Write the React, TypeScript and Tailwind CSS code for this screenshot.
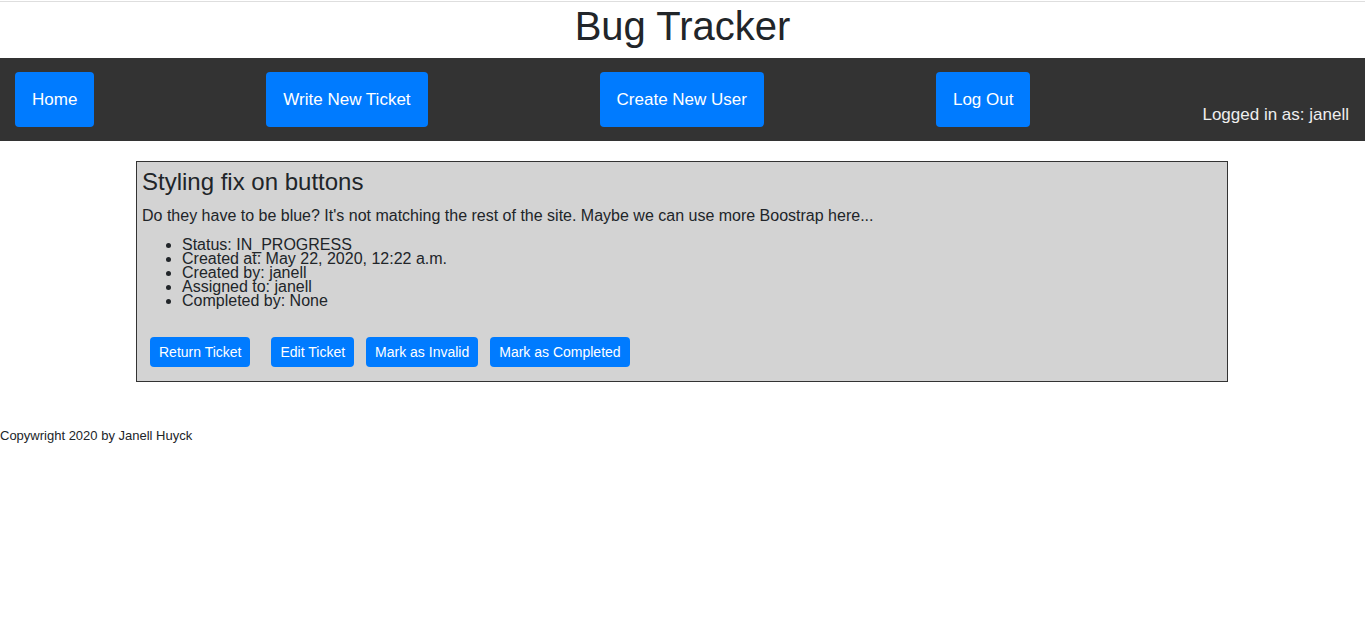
const navButtons = ["Home", "Write New Ticket", "Create New User", "Log Out"];

const details = [
  "Status: IN_PROGRESS",
  "Created at: May 22, 2020, 12:22 a.m.",
  "Created by: janell",
  "Assigned to: janell",
  "Completed by: None",
];

export default function App() {
  return (
    <div className="min-h-[637px] bg-white font-['Liberation_Sans',Arial,sans-serif] text-[#212529]">
      <div className="h-px mt-px bg-[#dedede]" />
      <h1 className="text-center text-[40px] leading-[48px] mb-[8px]">Bug Tracker</h1>

      <nav className="flex items-end justify-between bg-[#333333] pl-[15px] pr-[16px] py-[14px]">
        {navButtons.map((label) => (
          <button
            key={label}
            className="h-[55px] px-[17px] rounded-[4px] bg-[#007bff] text-[17px] text-white"
          >
            {label}
          </button>
        ))}
        <span className="text-[17px] leading-[25px] text-[#eeeeee]">Logged in as: janell</span>
      </nav>

      <div className="w-[1092px] ml-[136px] mt-[20px] border border-[#333333] bg-[#d3d3d3] p-[5px] pb-[14px]">
        <h3 className="text-[24px] leading-[29px] mb-[8px]">Styling fix on buttons</h3>
        <p className="text-[16px] leading-[24px]">
          Do they have to be blue? It's not matching the rest of the site. Maybe we can use more Boostrap here...
        </p>
        <ul className="list-disc pl-[40px] mt-[10px] text-[16px] leading-[14px]">
          {details.map((d) => (
            <li key={d}>{d}</li>
          ))}
        </ul>
        <div className="flex mt-[29px] pl-[8px]">
          <button className="h-[30px] px-[9px] rounded-[4px] bg-[#007bff] text-[14px] text-white">
            Return Ticket
          </button>
          <button className="ml-[21px] h-[30px] px-[9px] rounded-[4px] bg-[#007bff] text-[14px] text-white">
            Edit Ticket
          </button>
          <button className="ml-[12px] h-[30px] px-[9px] rounded-[4px] bg-[#007bff] text-[14px] text-white">
            Mark as Invalid
          </button>
          <button className="ml-[12px] h-[30px] px-[9px] rounded-[4px] bg-[#007bff] text-[14px] text-white">
            Mark as Completed
          </button>
        </div>
      </div>

      <footer className="mt-[44px] text-[13px] leading-[20px]">Copywright 2020 by Janell Huyck</footer>
    </div>
  );
}
